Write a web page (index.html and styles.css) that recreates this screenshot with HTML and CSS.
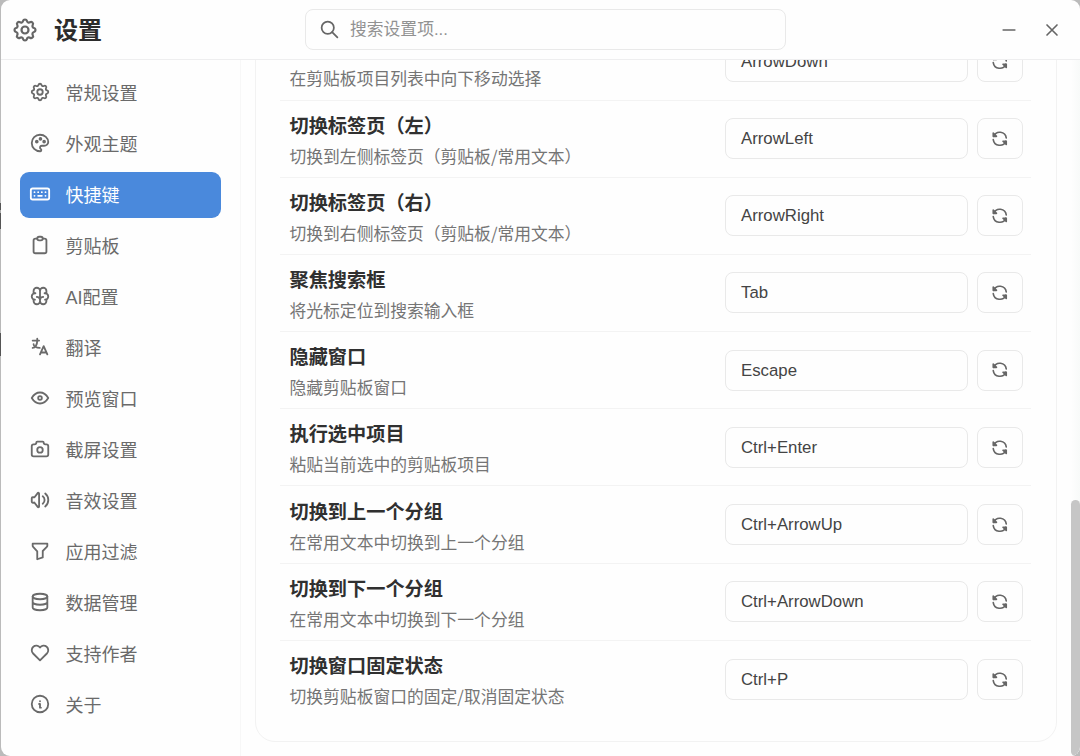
FILE: index.html
```html
<!DOCTYPE html>
<html lang="zh-CN">
<head>
<meta charset="utf-8">
<title>设置</title>
<link rel="stylesheet" href="styles.css">
</head>
<body>
<svg class="sprite" aria-hidden="true">
  <symbol id="settings" viewBox="0 0 24 24"><path d="M10.325 4.317c.426 -1.756 2.924 -1.756 3.35 0a1.724 1.724 0 0 0 2.573 1.066c1.543 -.94 3.31 .826 2.37 2.37a1.724 1.724 0 0 0 1.065 2.572c1.756 .426 1.756 2.924 0 3.35a1.724 1.724 0 0 0 -1.066 2.573c.94 1.543 -.826 3.31 -2.37 2.37a1.724 1.724 0 0 0 -2.572 1.065c-.426 1.756 -2.924 1.756 -3.35 0a1.724 1.724 0 0 0 -2.573 -1.066c-1.543 .94 -3.31 -.826 -2.37 -2.37a1.724 1.724 0 0 0 -1.065 -2.572c-1.756 -.426 -1.756 -2.924 0 -3.35a1.724 1.724 0 0 0 1.066 -2.573c-.94 -1.543 .826 -3.31 2.37 -2.37c1 .608 2.296 .07 2.572 -1.065z"/><circle cx="12" cy="12" r="3"/></symbol>
  <symbol id="palette" viewBox="0 0 24 24"><path d="M12 21a9 9 0 0 1 0 -18c4.97 0 9 3.582 9 8c0 1.06 -.474 2.078 -1.318 2.828c-.844 .75 -1.989 1.172 -3.182 1.172h-2.5a2 2 0 0 0 -1 3.75a1.3 1.3 0 0 1 -1 2.25"/><circle cx="8.5" cy="10.5" r="1"/><circle cx="12.5" cy="7.5" r="1"/><circle cx="16.5" cy="10.5" r="1"/></symbol>
  <symbol id="keyboard" viewBox="0 0 24 24"><rect x="2" y="6" width="20" height="12" rx="2"/><path d="M6 10h.01M10 10h.01M14 10h.01M18 10h.01M6 14h.01M18 14h.01M10 14h4"/></symbol>
  <symbol id="clipboard" viewBox="0 0 24 24"><path d="M9 5h-2a2 2 0 0 0 -2 2v12a2 2 0 0 0 2 2h10a2 2 0 0 0 2 -2v-12a2 2 0 0 0 -2 -2h-2"/><rect x="9" y="3" width="6" height="4" rx="2"/></symbol>
  <symbol id="brain" viewBox="0 0 24 24"><path d="M15.5 13a3.5 3.5 0 0 0 -3.5 3.5v1a3.5 3.5 0 0 0 7 0v-1.8M8.5 13a3.5 3.5 0 0 1 3.5 3.5v1a3.5 3.5 0 0 1 -7 0v-1.8M17.5 16a3.5 3.5 0 0 0 0 -7h-.5M19 9.3v-2.8a3.5 3.5 0 0 0 -7 0M6.5 16a3.5 3.5 0 0 1 0 -7h.5M5 9.3v-2.8a3.5 3.5 0 0 1 7 0v10"/></symbol>
  <symbol id="language" viewBox="0 0 24 24"><path d="M4 5h7M9 3v2c0 4.418 -2.239 8 -5 8M5 9c0 2.144 2.952 3.908 6.7 4M12 20l4 -9l4 9M19.1 18h-6.2"/></symbol>
  <symbol id="eye" viewBox="0 0 24 24"><circle cx="12" cy="12" r="2"/><path d="M21 12c-2.4 4 -5.4 6 -9 6c-3.6 0 -6.6 -2 -9 -6c2.4 -4 5.4 -6 9 -6c3.6 0 6.6 2 9 6"/></symbol>
  <symbol id="camera" viewBox="0 0 24 24"><path d="M5 7h1a2 2 0 0 0 2 -2a1 1 0 0 1 1 -1h6a1 1 0 0 1 1 1a2 2 0 0 0 2 2h1a2 2 0 0 1 2 2v9a2 2 0 0 1 -2 2h-14a2 2 0 0 1 -2 -2v-9a2 2 0 0 1 2 -2"/><circle cx="12" cy="13" r="3"/></symbol>
  <symbol id="volume" viewBox="0 0 24 24"><path d="M15 8a5 5 0 0 1 0 8M17.7 5a9 9 0 0 1 0 14M6 15h-2a1 1 0 0 1 -1 -1v-4a1 1 0 0 1 1 -1h2l3.5 -4.5a.8 .8 0 0 1 1.5 .5v14a.8 .8 0 0 1 -1.5 .5l-3.5 -4.5"/></symbol>
  <symbol id="filter" viewBox="0 0 24 24"><path d="M4 4h16v2.172a2 2 0 0 1 -.586 1.414l-4.414 4.414v7l-6 2v-8.5l-4.48 -4.928a2 2 0 0 1 -.52 -1.345v-2.227z"/></symbol>
  <symbol id="database" viewBox="0 0 24 24"><ellipse cx="12" cy="6" rx="8" ry="3"/><path d="M4 6v6a8 3 0 0 0 16 0v-6M4 12v6a8 3 0 0 0 16 0v-6"/></symbol>
  <symbol id="heart" viewBox="0 0 24 24"><path d="M19.5 12.572l-7.5 7.428l-7.5 -7.428a5 5 0 1 1 7.5 -6.566a5 5 0 1 1 7.5 6.572"/></symbol>
  <symbol id="info" viewBox="0 0 24 24"><circle cx="12" cy="12" r="9"/><path d="M12 9h.01M11 12h1v4h1"/></symbol>
  <symbol id="refresh" viewBox="0 0 24 24"><path d="M20 11a8.1 8.1 0 0 0 -15.5 -2M4 13a8.1 8.1 0 0 0 15.5 2"/><path class="arrowhead" d="M4 5v4h4zM20 19v-4h-4z"/></symbol>
  <symbol id="search" viewBox="0 0 24 24"><circle cx="10" cy="10" r="7"/><path d="M21 21l-6 -6"/></symbol>
  <symbol id="minus" viewBox="0 0 24 24"><path d="M5 12h14"/></symbol>
  <symbol id="close" viewBox="0 0 24 24"><path d="M18 6l-12 12M6 6l12 12"/></symbol>
</svg>
<div class="window">
  <header class="titlebar">
    <div class="brand"><svg class="icon icon-brand"><use href="#settings"/></svg><h1 class="title">设置</h1></div>
    <div class="search"><svg class="icon icon-search"><use href="#search"/></svg><span class="placeholder">搜索设置项...</span></div>
    <div class="controls"><svg class="icon icon-control"><use href="#minus"/></svg><svg class="icon icon-control"><use href="#close"/></svg></div>
  </header>
  <div class="body">
    <nav class="sidebar">
      <a class="nav-item"><svg class="icon"><use href="#settings"/></svg><span class="nav-text">常规设置</span></a>
      <a class="nav-item"><svg class="icon"><use href="#palette"/></svg><span class="nav-text">外观主题</span></a>
      <a class="nav-item active"><svg class="icon"><use href="#keyboard"/></svg><span class="nav-text">快捷键</span></a>
      <a class="nav-item"><svg class="icon"><use href="#clipboard"/></svg><span class="nav-text">剪贴板</span></a>
      <a class="nav-item"><svg class="icon"><use href="#brain"/></svg><span class="nav-text">AI配置</span></a>
      <a class="nav-item"><svg class="icon"><use href="#language"/></svg><span class="nav-text">翻译</span></a>
      <a class="nav-item"><svg class="icon"><use href="#eye"/></svg><span class="nav-text">预览窗口</span></a>
      <a class="nav-item"><svg class="icon"><use href="#camera"/></svg><span class="nav-text">截屏设置</span></a>
      <a class="nav-item"><svg class="icon"><use href="#volume"/></svg><span class="nav-text">音效设置</span></a>
      <a class="nav-item"><svg class="icon"><use href="#filter"/></svg><span class="nav-text">应用过滤</span></a>
      <a class="nav-item"><svg class="icon"><use href="#database"/></svg><span class="nav-text">数据管理</span></a>
      <a class="nav-item"><svg class="icon"><use href="#heart"/></svg><span class="nav-text">支持作者</span></a>
      <a class="nav-item"><svg class="icon"><use href="#info"/></svg><span class="nav-text">关于</span></a>
    </nav>
    <main class="content">
      <section class="card">
        <div class="row"><div class="label"><p class="desc">在剪贴板项目列表中向下移动选择</p></div><div class="key">ArrowDown</div><div class="reset"><svg class="icon icon-reset"><use href="#refresh"/></svg></div></div>
        <div class="row"><div class="label"><h2 class="name">切换标签页（左）</h2><p class="desc">切换到左侧标签页（剪贴板/常用文本）</p></div><div class="key">ArrowLeft</div><div class="reset"><svg class="icon icon-reset"><use href="#refresh"/></svg></div></div>
        <div class="row"><div class="label"><h2 class="name">切换标签页（右）</h2><p class="desc">切换到右侧标签页（剪贴板/常用文本）</p></div><div class="key">ArrowRight</div><div class="reset"><svg class="icon icon-reset"><use href="#refresh"/></svg></div></div>
        <div class="row"><div class="label"><h2 class="name">聚焦搜索框</h2><p class="desc">将光标定位到搜索输入框</p></div><div class="key">Tab</div><div class="reset"><svg class="icon icon-reset"><use href="#refresh"/></svg></div></div>
        <div class="row"><div class="label"><h2 class="name">隐藏窗口</h2><p class="desc">隐藏剪贴板窗口</p></div><div class="key">Escape</div><div class="reset"><svg class="icon icon-reset"><use href="#refresh"/></svg></div></div>
        <div class="row"><div class="label"><h2 class="name">执行选中项目</h2><p class="desc">粘贴当前选中的剪贴板项目</p></div><div class="key">Ctrl+Enter</div><div class="reset"><svg class="icon icon-reset"><use href="#refresh"/></svg></div></div>
        <div class="row"><div class="label"><h2 class="name">切换到上一个分组</h2><p class="desc">在常用文本中切换到上一个分组</p></div><div class="key">Ctrl+ArrowUp</div><div class="reset"><svg class="icon icon-reset"><use href="#refresh"/></svg></div></div>
        <div class="row"><div class="label"><h2 class="name">切换到下一个分组</h2><p class="desc">在常用文本中切换到下一个分组</p></div><div class="key">Ctrl+ArrowDown</div><div class="reset"><svg class="icon icon-reset"><use href="#refresh"/></svg></div></div>
        <div class="row"><div class="label"><h2 class="name">切换窗口固定状态</h2><p class="desc">切换剪贴板窗口的固定/取消固定状态</p></div><div class="key">Ctrl+P</div><div class="reset"><svg class="icon icon-reset"><use href="#refresh"/></svg></div></div>
      </section>
    </main>
    <div class="scrollbar"><div class="thumb"></div></div>
  </div>
</div>
</body>
</html>
```
FILE: styles.css
```css
* { box-sizing: border-box; }
body {
  margin: 0;
  height: 756px;
  overflow: hidden;
  /* desktop visible along the window's left edge */
  background: linear-gradient(#bbb 203px, #555 203px 210px, #aaa 210px 213px, #555 213px 229px, #b8b8b8 229px 333px, #555 333px 356px, #bbb 356px);
  font-family: "Liberation Sans", "Noto Sans CJK SC", sans-serif;
}
.sprite { display: none; }
h1, h2, p { margin: 0; }
.window {
  height: 756px;
  margin-left: 1px;
  display: flex;
  flex-direction: column;
  background: #fefefe;
  border-radius: 9px;
  overflow: hidden;
}
.icon {
  width: 22px;
  height: 22px;
  flex: none;
  fill: none;
  stroke: currentColor;
  stroke-width: 2;
  stroke-linecap: round;
  stroke-linejoin: round;
}
.arrowhead { fill: currentColor; }
.titlebar {
  height: 60px;
  flex: none;
  display: grid;
  grid-template-columns: 292px 481px 1fr;
  column-gap: 12px;
  align-items: center;
  border-bottom: 1px solid #eeeeef;
  color: #666;
}
.brand { display: flex; align-items: center; gap: 15px; padding-left: 10px; }
.icon-brand { width: 28px; height: 28px; stroke-width: 1.9; }
.title { padding-top: 2px; font-size: 24px; line-height: 36px; font-weight: 700; color: #2c2c2c; }
.search {
  height: 41px;
  display: flex;
  align-items: center;
  gap: 10px;
  padding-left: 13px;
  border: 1px solid #e9e9e9;
  border-radius: 8px;
}
.icon-search { width: 21px; height: 21px; }
.placeholder { padding-bottom: 3px; font-size: 16.8px; color: #929292; }
.controls { display: flex; justify-content: flex-end; gap: 23px; padding-right: 18px; }
.icon-control { width: 20px; height: 20px; }
.body { flex: 1; min-height: 0; display: flex; }
.sidebar {
  width: 240px;
  flex: none;
  display: flex;
  flex-direction: column;
  gap: 5.5px;
  padding: 10px 19px 0 19px;
  border-right: 1px solid #f7f7f7;
}
.nav-item {
  height: 45.5px;
  flex: none;
  display: flex;
  align-items: center;
  gap: 14px;
  padding-left: 9px;
  border-radius: 9px;
  font-size: 18px;
  color: #6a6a6a;
}
.nav-item .icon { margin-top: -1px; }
.nav-text { padding: 0 0 2px .5px; }
.nav-item.active { background: #4a89dc; color: #fff; }
.content {
  width: 816px;
  flex: none;
  padding: 0 0 14px 14px;
  display: flex;
  flex-direction: column;
  justify-content: flex-end;
  overflow: hidden;
}
.card {
  flex: none;
  height: 760px;
  display: flex;
  flex-direction: column;
  justify-content: flex-end;
  padding: 0 25px 23px 24px;
  border: 1px solid #f2f2f2;
  border-radius: 20px;
}
.row {
  height: 77.2px;
  flex: none;
  display: flex;
  align-items: center;
  padding: 0 8px 0 9.5px;
  border-bottom: 1px solid #f3f3f3;
}
.row:last-child { border-bottom: 0; }
.label { flex: 1; display: flex; flex-direction: column; justify-content: flex-end; height: 60px; }
.name { font-size: 19.2px; line-height: 28px; font-weight: 700; color: #303030; white-space: nowrap; }
.desc { margin-top: 2px; font-family: "Noto Sans CJK SC", sans-serif; font-size: 16.8px; line-height: 26px; color: #757575; white-space: nowrap; }
.key {
  width: 243px;
  height: 41px;
  padding: 0 15px;
  font-size: 16.8px;
  line-height: 40px;
  color: #444;
  border: 1px solid #e9e9e9;
  border-radius: 8px;
}
.reset {
  width: 46px;
  height: 41px;
  margin-left: 9px;
  display: flex;
  align-items: center;
  justify-content: center;
  border: 1px solid #e9e9e9;
  border-radius: 8px;
  color: #666;
}
.icon-reset { width: 19.5px; height: 19.5px; }
.scrollbar { flex: 1; display: flex; flex-direction: column; align-items: flex-end; justify-content: flex-end; background: linear-gradient(90deg, #fefefe 60%, #f8faf9); }
.thumb { width: 9px; height: 256px; border-radius: 5px; background: #c6c6c6; }
```
